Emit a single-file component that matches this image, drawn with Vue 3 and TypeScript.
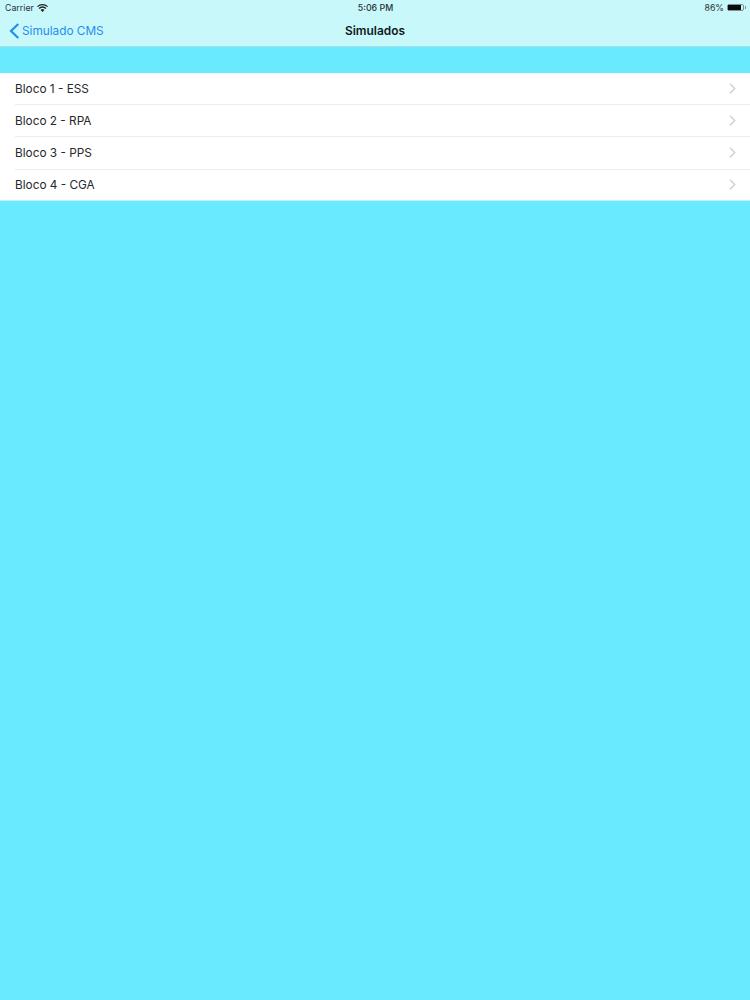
<script setup lang="ts">
const items: string[] = ['Bloco 1 - ESS', 'Bloco 2 - RPA', 'Bloco 3 - PPS', 'Bloco 4 - CGA']
</script>

<template>
  <div class="page">
    <header class="top">
      <div class="status">
        <div class="status-left">
          <span>Carrier</span>
          <svg width="11" height="8" viewBox="0 0 11 8"><path d="M5.5 8 3.6 5.9a2.8 2.8 0 0 1 3.8 0zM2.7 5 1.6 3.9a5.7 5.7 0 0 1 7.8 0L8.3 5a4.2 4.2 0 0 0-5.6 0zM.8 3.1 0 2.2a8 8 0 0 1 11 0l-.8.9a6.8 6.8 0 0 0-9.4 0z" fill="#222"/></svg>
        </div>
        <div class="time">5:06 PM</div>
        <div class="status-right">
          <span>86%</span>
          <span class="battery"><span class="level"></span></span>
          <span class="nub"></span>
        </div>
      </div>
      <nav class="nav">
        <div class="back">
          <svg width="11" height="16" viewBox="0 0 11 16"><path d="M9.3 1 2 8l7.3 7" fill="none" stroke="#1f8ef1" stroke-width="2.2"/></svg>
          <span>Simulado CMS</span>
        </div>
        <div class="title">Simulados</div>
      </nav>
    </header>
    <ul class="list">
      <li v-for="item in items" :key="item" class="row">
        <div class="row-inner">
          <span>{{ item }}</span>
          <svg width="7" height="11" viewBox="0 0 7 11"><path d="M1 .8 5.8 5.5 1 10.2" fill="none" stroke="#cfcfd3" stroke-width="1.4"/></svg>
        </div>
      </li>
    </ul>
  </div>
</template>

<style>
body { margin: 0; }
</style>

<style scoped>
.page {
  width: 750px;
  height: 1000px;
  background: #69eaff;
  font-family: Inter, "Liberation Sans", sans-serif;
  overflow: hidden;
}
.top {
  height: 47px;
  box-sizing: border-box;
  background: #c9f8fb;
  border-bottom: 1px solid #a9dfe6;
}
.status {
  height: 15px;
  display: grid;
  grid-template-columns: 1fr auto 1fr;
  align-items: center;
  padding: 0 4px 0 5px;
  font-size: 8.8px;
  color: #2a3338;
}
.status-left { display: flex; align-items: center; gap: 3px; }
.time { font-weight: 500; }
.status-right { display: flex; align-items: center; justify-content: flex-end; }
.status-right > span:first-child { margin-right: 3px; }
.battery {
  border: 1px solid #7d9095;
  border-radius: 2px;
  display: block;
  width: 15px;
  height: 5px;
}
.level { display: block; width: 86%; height: 100%; background: #0c0c0c; }
.nub { width: 1px; height: 3px; background: #7d9095; margin-left: 1px; }
.nav {
  position: relative;
  height: 31px;
  display: flex;
  align-items: center;
  justify-content: center;
}
.back {
  position: absolute;
  left: 9px;
  top: 0;
  height: 100%;
  display: flex;
  align-items: center;
  gap: 2px;
  color: #1f8ef1;
  font-size: 11.8px;
}
.title { font-size: 11.9px; font-weight: 600; color: #10181c; }
.list {
  list-style: none;
  margin: 26px 0 0;
  padding: 0;
  background: #fff;
  border-bottom: 1px solid #c7eef2;
}
.row { height: 32.2px; padding-left: 15px; }
.row:last-child { height: 30.4px; }
.row-inner {
  height: 100%;
  box-sizing: border-box;
  padding-right: 14px;
  display: flex;
  align-items: center;
  justify-content: space-between;
  border-bottom: 1px solid #ececee;
  font-size: 11.8px;
  color: #26282a;
}
.row:last-child .row-inner { border-bottom: 0; }
</style>
